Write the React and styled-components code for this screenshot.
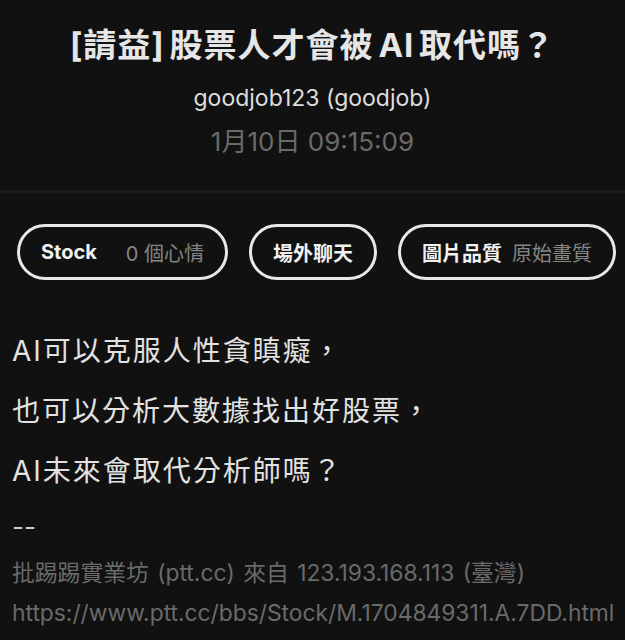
import React from 'react';
import styled, { createGlobalStyle } from 'styled-components';

const GlobalStyle = createGlobalStyle`
  html, body {
    margin: 0;
    padding: 0;
    background-color: #111111;
  }
  body {
    font-family: Inter, 'Noto Sans CJK TC', sans-serif;
    color: #e4e4e4;
  }
`;

const Page = styled.div`
  width: 625px;
  height: 640px;
  overflow: hidden;
  background-color: #111111;
`;

const Header = styled.header`
  display: flex;
  flex-direction: column;
  align-items: center;
  padding: 23px 0 33px;
  border-bottom: 3px solid #1a1a1a;
`;

const Title = styled.h1`
  margin: 0;
  font-size: 33px;
  line-height: 44px;
  font-weight: 700;
  letter-spacing: 1px;
  word-spacing: -4px;
  color: #e6e6e6;
`;

const Author = styled.div`
  margin-top: 16px;
  font-size: 23px;
  line-height: 30px;
  color: #dedede;
`;

const Time = styled.div`
  margin-top: 14px;
  font-size: 26px;
  line-height: 30px;
  color: #6a6a6a;
`;

const Toolbar = styled.div`
  display: flex;
  gap: 21px;
  padding: 31px 0 0 17px;
`;

const Pill = styled.div`
  display: flex;
  flex-shrink: 0;
  align-items: center;
  gap: ${(p) => p.gap || 10}px;
  height: 50px;
  padding: 0 21px;
  border: 3px solid #e8e8e8;
  border-radius: 30px;
  font-size: 20px;
  white-space: nowrap;
`;

const PillLabel = styled.span`
  font-weight: 700;
  color: #f0f0f0;
`;

const PillValue = styled.span`
  color: #858585;
`;

const Content = styled.article`
  padding: 41px 12px 0;
`;

const Line = styled.p`
  margin: 0;
  font-size: 28px;
  line-height: 60px;
  letter-spacing: 2px;
  color: #e2e2e2;
`;

const Dashes = styled.p`
  margin: 0;
  font-size: 26px;
  line-height: 52px;
  color: #d0d0d0;
`;

const Meta = styled.p`
  margin: 0;
  font-size: 22.8px;
  line-height: 40px;
  word-spacing: 2px;
  white-space: nowrap;
  color: #6a6a6a;
`;

export default function App() {
  return (
    <Page>
      <GlobalStyle />
      <Header>
        <Title>[請益] 股票人才會被 AI 取代嗎？</Title>
        <Author>goodjob123 (goodjob)</Author>
        <Time>1月10日 09:15:09</Time>
      </Header>

      <Toolbar>
        <Pill gap={29}>
          <PillLabel>Stock</PillLabel>
          <PillValue>0 個心情</PillValue>
        </Pill>
        <Pill>
          <PillLabel>場外聊天</PillLabel>
        </Pill>
        <Pill>
          <PillLabel>圖片品質</PillLabel>
          <PillValue>原始畫質</PillValue>
        </Pill>
      </Toolbar>

      <Content>
        <Line>AI可以克服人性貪瞋癡，</Line>
        <Line>也可以分析大數據找出好股票，</Line>
        <Line>AI未來會取代分析師嗎？</Line>
        <Dashes>--</Dashes>
        <Meta>批踢踢實業坊 (ptt.cc) 來自 123.193.168.113 (臺灣)</Meta>
        <Meta>https://www.ptt.cc/bbs/Stock/M.1704849311.A.7DD.html</Meta>
      </Content>
    </Page>
  );
}
